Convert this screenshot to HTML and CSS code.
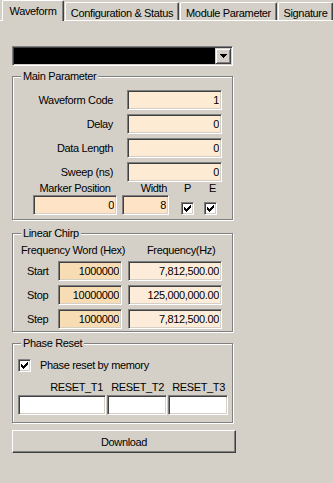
FILE: index.html
```html
<!DOCTYPE html>
<html lang="en">
<head>
  <meta charset="UTF-8">
  <title>Waveform</title>
  <link rel="stylesheet" href="styles.css">
</head>
<body>

  <div class="tabs">
    <div class="tab active tab-wave">Waveform</div>
    <div class="tab tab-config">Configuration &amp; Status</div>
    <div class="tab tab-module">Module Parameter</div>
    <div class="tab tab-sign">Signature</div>
  </div>

  <div class="pane">
    <div class="combo">
      <span class="combo-btn">
        <svg width="7" height="4" viewBox="0 0 7 4"><path d="M0 0h7v1H0zM1 1h5v1H1zM2 2h3v1H2zM3 3h1v1H3z" fill="#000"/></svg>
      </span>
    </div>

    <div class="group main">
      <span class="group-title">Main Parameter</span>
      <div class="row"><span class="row-label">Waveform Code</span><input class="field field-main" value="1"></div>
      <div class="row"><span class="row-label">Delay</span><input class="field field-main" value="0"></div>
      <div class="row"><span class="row-label">Data Length</span><input class="field field-main" value="0"></div>
      <div class="row"><span class="row-label">Sweep (ns)</span><input class="field field-main" value="0"></div>

      <div class="marker-head">
        <span class="m-col">Marker Position</span>
        <span class="w-col">Width</span>
        <span class="p-col">P</span>
        <span class="e-col">E</span>
      </div>
      <div class="marker-fields">
        <input class="field field-marker m-col" value="0">
        <input class="field field-marker w-col" value="8">
        <span class="check p-col"><svg width="7" height="7" viewBox="0 0 7 7"><path d="M0 2h1v3H0zM1 3h1v3H1zM2 4h1v3H2zM3 3h1v3H3zM4 2h1v3H4zM5 1h1v3H5zM6 0h1v3H6z" fill="#000"/></svg></span>
        <span class="check e-col"><svg width="7" height="7" viewBox="0 0 7 7"><path d="M0 2h1v3H0zM1 3h1v3H1zM2 4h1v3H2zM3 3h1v3H3zM4 2h1v3H4zM5 1h1v3H5zM6 0h1v3H6z" fill="#000"/></svg></span>
      </div>
    </div>

    <div class="group chirp">
      <span class="group-title">Linear Chirp</span>
      <div class="chirp-head">
        <span class="hex-head">Frequency Word (Hex)</span>
        <span>Frequency(Hz)</span>
      </div>
      <div class="chirp-row"><span class="chirp-label">Start</span><input class="field field-hex" value="1000000"><input class="field field-freq" value="7,812,500.00"></div>
      <div class="chirp-row"><span class="chirp-label">Stop</span><input class="field field-hex" value="10000000"><input class="field field-freq" value="125,000,000.00"></div>
      <div class="chirp-row"><span class="chirp-label">Step</span><input class="field field-hex" value="1000000"><input class="field field-freq" value="7,812,500.00"></div>
    </div>

    <div class="group phase">
      <span class="group-title">Phase Reset</span>
      <div class="phase-check">
        <span class="check"><svg width="7" height="7" viewBox="0 0 7 7"><path d="M0 2h1v3H0zM1 3h1v3H1zM2 4h1v3H2zM3 3h1v3H3zM4 2h1v3H4zM5 1h1v3H5zM6 0h1v3H6z" fill="#000"/></svg></span>
        <span>Phase reset by memory</span>
      </div>
      <div class="reset-head">
        <span class="r1">RESET_T1</span>
        <span class="r2">RESET_T2</span>
        <span class="r3">RESET_T3</span>
      </div>
      <div class="reset-fields">
        <input class="field field-reset r1" value="">
        <input class="field field-reset r2" value="">
        <input class="field field-reset r3" value="">
      </div>
    </div>

    <button class="btn">Download</button>
  </div>

</body>
</html>
```

FILE: styles.css
```css
body {
  margin: 0;
  width: 333px;
  height: 483px;
  overflow: hidden;
  background: #d4d0c8;
  font-family: "Liberation Sans", Arial, sans-serif;
  font-size: 11px;
  letter-spacing: -0.35px;
  color: #000;
}

/* tabs */
.tabs {
  display: flex;
  align-items: flex-end;
  gap: 1px;
  height: 20px;
  padding-left: 2px;
  border-bottom: 1px solid #fff;
}

.tab {
  flex-shrink: 0;
  height: 18px;
  box-sizing: border-box;
  padding-top: 2px;
  border: 1px solid #fff;
  border-bottom: none;
  border-right-color: #404040;
  border-radius: 2px 2px 0 0;
  box-shadow: inset -1px 0 0 #808080;
  display: flex;
  align-items: center;
  justify-content: center;
  line-height: 12px;
  background: #d4d0c8;
}

.tab.active {
  height: 21px;
  padding-top: 0;
  margin-bottom: -1px;
  z-index: 1;
}

.tab-wave { width: 62px; }
.tab-config { width: 114px; }
.tab-module { width: 97px; }
.tab-sign { width: 55px; }

.pane {
  padding: 25px 0 0 12px;
}

/* sunken 3d edge */
.combo,
.field,
.check {
  box-sizing: border-box;
  border: 1px solid;
  border-color: #808080 #fff #fff #808080;
  box-shadow: inset 1px 1px 0 #404040, inset -1px -1px 0 #d4d0c8;
}

.combo {
  width: 221px;
  height: 20px;
  padding: 1px;
  background: #000;
  display: flex;
  justify-content: flex-end;
}

.combo-btn {
  width: 16px;
  height: 16px;
  box-sizing: border-box;
  border: 1px solid;
  border-color: #d4d0c8 #404040 #404040 #d4d0c8;
  box-shadow: inset 1px 1px 0 #fff, inset -1px -1px 0 #808080;
  background: #d4d0c8;
  display: flex;
  align-items: center;
  justify-content: center;
}

.combo-btn svg {
  display: block;
}

/* group boxes */
.group {
  position: relative;
  width: 221px;
  box-sizing: border-box;
  border: 1px solid #808080;
  box-shadow: inset 1px 1px 0 #fff, 1px 1px 0 #fff;
}

.group-title {
  position: absolute;
  top: -7px;
  left: 8px;
  padding: 0 2px;
  line-height: 13px;
  background: #d4d0c8;
}

.field {
  height: 20px;
  margin: 0;
  padding: 0 2px;
  font: inherit;
  letter-spacing: inherit;
  color: #000;
  text-align: right;
  outline: none;
}

.check {
  width: 13px;
  height: 13px;
  flex-shrink: 0;
  background: #fff;
  display: flex;
  align-items: center;
  justify-content: center;
}

.check svg {
  display: block;
}

/* main parameter */
.main {
  margin-top: 10px;
  padding: 13px 0 4px;
}

.row {
  display: flex;
  align-items: center;
  height: 20px;
  margin-bottom: 4px;
}

.row:nth-of-type(4) {
  margin-bottom: 0;
}

.row-label {
  width: 100px;
  text-align: right;
}

.field-main {
  width: 95px;
  margin-left: 14px;
  background: #fdebd4;
}

.marker-head,
.marker-fields {
  display: flex;
  padding-left: 20px;
}

.marker-head {
  line-height: 12px;
}

.marker-fields {
  align-items: flex-end;
  margin-top: 1px;
}

.m-col {
  width: 84px;
  text-align: center;
}

.w-col {
  width: 47px;
  margin-left: 5px;
  box-sizing: border-box;
  padding-right: 2px;
  text-align: right;
}

.p-col {
  width: 13px;
  margin-left: 12px;
  text-align: center;
}

.e-col {
  width: 13px;
  margin-left: 10px;
  text-align: center;
}

.marker-head .e-col {
  padding-left: 4px;
  box-sizing: border-box;
}

.field-marker {
  background: #fee3c6;
  text-align: right;
}

/* linear chirp */
.chirp {
  margin-top: 13px;
  padding: 10px 0 2px;
}

.chirp-head {
  display: flex;
  padding-left: 8px;
  line-height: 12px;
  margin-bottom: 5px;
}

.hex-head {
  width: 126px;
}

.chirp-row {
  display: flex;
  align-items: center;
  height: 20px;
  padding-left: 14px;
  margin-bottom: 4px;
}

.chirp-row:last-child {
  margin-bottom: 0;
}

.chirp-label {
  width: 31px;
}

.field-hex {
  width: 64px;
  background: #f7dcb4;
}

.field-freq {
  width: 94px;
  margin-left: 6px;
  background: #fdecd9;
}

/* phase reset */
.phase {
  margin-top: 11px;
  padding: 15px 0 7px 5px;
}

.phase-check {
  display: flex;
  align-items: center;
  gap: 9px;
  height: 13px;
  line-height: 13px;
}

.reset-head,
.reset-fields {
  display: flex;
  gap: 1px;
}

.reset-head {
  margin-top: 9px;
  line-height: 12px;
}

.reset-head span {
  box-sizing: border-box;
  padding-right: 3px;
  text-align: right;
}

.reset-fields {
  margin-top: 2px;
}

.r1 { width: 88px; }
.r2 { width: 60px; }
.r3 { width: 60px; }

.field-reset {
  background: #fff;
}

/* button */
.btn {
  display: block;
  margin-top: 7px;
  width: 224px;
  height: 23px;
  padding: 0;
  box-sizing: border-box;
  border: 1px solid;
  border-color: #fff #404040 #404040 #fff;
  box-shadow: inset -1px -1px 0 #808080;
  background: #d4d0c8;
  font: inherit;
  letter-spacing: inherit;
  color: #000;
}
```
